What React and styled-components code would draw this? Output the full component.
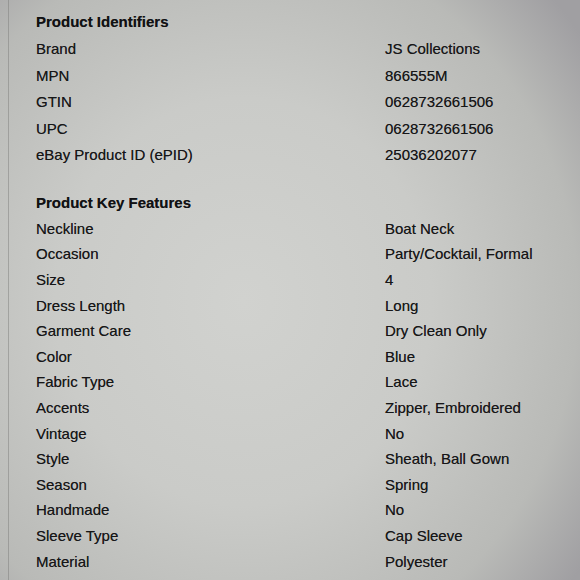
import { createGlobalStyle, styled } from 'styled-components';

const identifiers = [
  ['Brand', 'JS Collections'],
  ['MPN', '866555M'],
  ['GTIN', '0628732661506'],
  ['UPC', '0628732661506'],
  ['eBay Product ID (ePID)', '25036202077'],
];

const features = [
  ['Neckline', 'Boat Neck'],
  ['Occasion', 'Party/Cocktail, Formal'],
  ['Size', '4'],
  ['Dress Length', 'Long'],
  ['Garment Care', 'Dry Clean Only'],
  ['Color', 'Blue'],
  ['Fabric Type', 'Lace'],
  ['Accents', 'Zipper, Embroidered'],
  ['Vintage', 'No'],
  ['Style', 'Sheath, Ball Gown'],
  ['Season', 'Spring'],
  ['Handmade', 'No'],
  ['Sleeve Type', 'Cap Sleeve'],
  ['Material', 'Polyester'],
];

export default function App() {
  return (
    <>
      <GlobalStyle />
      <Screen>
        <Panel>
          <Section rowH={26.5}>
            <Heading>Product Identifiers</Heading>
            {identifiers.map(([label, value]) => (
              <Row key={label}>
                <Label>{label}</Label>
                <Value>{value}</Value>
              </Row>
            ))}
          </Section>
          <Section rowH={25.6} $spaced>
            <Heading>Product Key Features</Heading>
            {features.map(([label, value]) => (
              <Row key={label}>
                <Label>{label}</Label>
                <Value>{value}</Value>
              </Row>
            ))}
          </Section>
        </Panel>
      </Screen>
    </>
  );
}

const GlobalStyle = createGlobalStyle`
  html, body {
    margin: 0;
    padding: 0;
  }
  body {
    font-family: "Liberation Sans", Arial, sans-serif;
    color: #161617;
  }
`;

const Screen = styled.div`
  width: 580px;
  height: 580px;
  overflow: hidden;
  background: radial-gradient(ellipse 72% 78% at 42% 52%, #d1d2cf 0%, #cacbc8 45%, #b9bab7 80%, #a09fa2 100%);
  padding-left: 8px;
  box-sizing: border-box;
`;

const Panel = styled.div`
  height: 100%;
  border-left: 1px solid rgba(120, 120, 118, 0.45);
  padding: 9px 0 0 27px;
  box-sizing: border-box;
  text-shadow: 0 0 0.5px rgba(20, 20, 22, 0.6);
`;

const Section = styled.div`
  display: flex;
  flex-direction: column;
  margin-top: ${(p) => (p.$spaced ? '22px' : '0')};

  > div {
    height: ${(p) => p.rowH}px;
  }
`;

const Heading = styled.div`
  font-size: 15px;
  font-weight: 700;
  line-height: 26px;
  color: #111113;
`;

const Row = styled.div`
  display: grid;
  grid-template-columns: 349px 1fr;
  align-items: center;
  font-size: 15px;
`;

const Label = styled.span`
  white-space: nowrap;
`;

const Value = styled.span`
  white-space: nowrap;
`;
